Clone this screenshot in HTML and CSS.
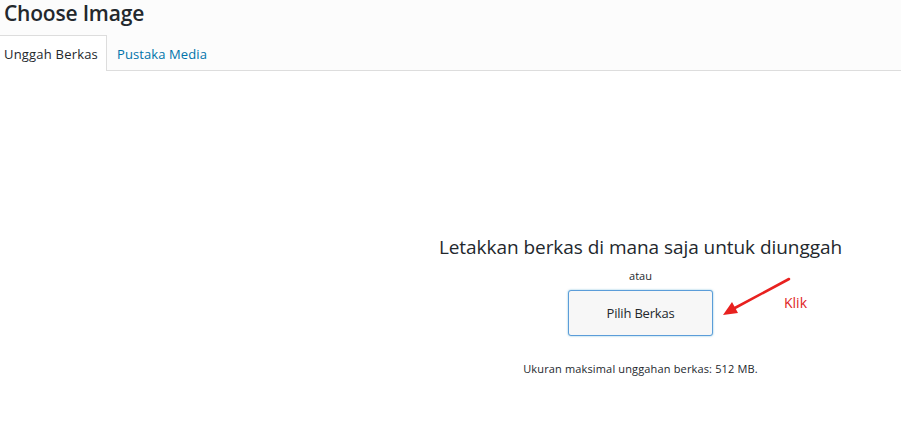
FILE: index.html
```html
<!DOCTYPE html>
<html lang="id">
<head>
<meta charset="utf-8">
<title>Choose Image</title>
<link rel="stylesheet" href="styles.css">
</head>
<body>
<header class="modal-header">
  <h1 class="modal-title">Choose Image</h1>
  <nav class="tabs">
    <a class="tab tab-active">Unggah Berkas</a>
    <a class="tab">Pustaka Media</a>
  </nav>
</header>
<main class="uploader">
  <div class="spacer"></div>
  <div class="drop">
    <h2 class="drop-title">Letakkan berkas di mana saja untuk diunggah</h2>
    <p class="drop-or">atau</p>
    <div class="btn-wrap">
      <button class="btn">Pilih Berkas</button>
      <div class="annot">
        <svg class="arrow" width="72" height="42" viewBox="0 0 72 42">
          <line x1="68" y1="3" x2="12" y2="33" stroke="#e8211f" stroke-width="2.6" stroke-linecap="round"/>
          <polygon points="2,39 11,26 17,37" fill="#e8211f"/>
        </svg>
        <span class="klik">Klik</span>
      </div>
    </div>
    <p class="drop-max">Ukuran maksimal unggahan berkas: 512 MB.</p>
  </div>
</main>
</body>
</html>
```
FILE: styles.css
```css
html, body {
  margin: 0;
  padding: 0;
  background: #ffffff;
}
body {
  font-family: "Open Sans", "Noto Sans", sans-serif;
  color: #23282d;
  width: 901px;
  height: 425px;
  overflow: hidden;
}
.modal-header {
  background: #fcfcfc;
  border-bottom: 1px solid #dddddd;
  height: 70px;
  display: flex;
  flex-direction: column;
}
.modal-title {
  margin: 0;
  padding: 0 0 0 4px;
  height: 35px;
  font-size: 21px;
  font-weight: 600;
  line-height: 26px;
  letter-spacing: -0.2px;
  color: #23282d;
}
.tabs {
  display: flex;
  height: 35px;
  align-items: stretch;
}
.tab {
  font-size: 13px;
  line-height: 38px;
  padding: 0 10px 0 4px;
  color: #0073aa;
  letter-spacing: 0.1px;
  white-space: nowrap;
}
.tab-active {
  color: #23282d;
  background: #ffffff;
  border-top: 1px solid #dddddd;
  border-right: 1px solid #dddddd;
  line-height: 37px;
  height: 35px;
  margin-bottom: -1px;
  padding-right: 8px;
  letter-spacing: 0.2px;
}
.tab + .tab {
  padding-left: 10px;
}
.uploader {
  display: flex;
}
.spacer {
  width: 380px;
  flex: none;
}
.drop {
  flex: 1;
  display: flex;
  flex-direction: column;
  align-items: center;
  padding-top: 164px;
}
.drop-title {
  margin: 0;
  font-size: 19px;
  font-weight: 400;
  line-height: 24px;
  letter-spacing: -0.05px;
  color: #23282d;
}
.drop-or {
  margin: 10px 0 0;
  font-size: 11px;
  line-height: 14px;
  color: #23282d;
}
.btn-wrap {
  position: relative;
  margin-top: 7px;
}
.btn {
  display: block;
  width: 145px;
  height: 46px;
  background: #f7f7f7;
  border: 1px solid #5b9dd9;
  border-radius: 3px;
  box-shadow: 0 0 2px rgba(30, 140, 190, 0.6);
  font-family: "Open Sans", "Noto Sans", sans-serif;
  font-size: 13px;
  color: #23282d;
  letter-spacing: -0.2px;
  padding: 0;
}
.annot {
  position: absolute;
  left: 153px;
  top: -14px;
  width: 100px;
  height: 50px;
}
.arrow {
  position: absolute;
  left: 0;
  top: 0;
}
.klik {
  position: absolute;
  left: 63px;
  top: 17px;
  font-size: 14px;
  color: #e02424;
}
.drop-max {
  margin: 26px 0 0;
  font-size: 11px;
  line-height: 14px;
  color: #23282d;
  letter-spacing: 0.15px;
}
```
